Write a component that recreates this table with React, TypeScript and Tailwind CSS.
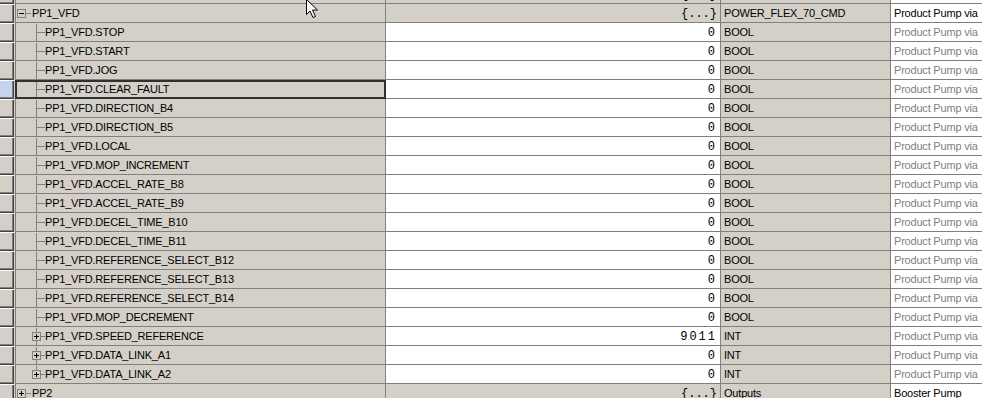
import React from "react";

type Row = {
  name: string;
  level: 0 | 1;
  box?: "+" | "-";
  value: string;
  type: string;
  desc: string;
  last?: boolean;
  focus?: boolean;
};

const leafNames = [
  "STOP",
  "START",
  "JOG",
  "CLEAR_FAULT",
  "DIRECTION_B4",
  "DIRECTION_B5",
  "LOCAL",
  "MOP_INCREMENT",
  "ACCEL_RATE_B8",
  "ACCEL_RATE_B9",
  "DECEL_TIME_B10",
  "DECEL_TIME_B11",
  "REFERENCE_SELECT_B12",
  "REFERENCE_SELECT_B13",
  "REFERENCE_SELECT_B14",
  "MOP_DECREMENT",
];

const rows: Row[] = [
  { name: "PP1_VFD", level: 0, box: "-", value: "{...}", type: "POWER_FLEX_70_CMD", desc: "Product Pump via" },
  ...leafNames.map((n) => ({
    name: "PP1_VFD." + n,
    level: 1 as const,
    value: "0",
    type: "BOOL",
    desc: "Product Pump via",
    focus: n === "CLEAR_FAULT",
  })),
  { name: "PP1_VFD.SPEED_REFERENCE", level: 1, box: "+", value: "9011", type: "INT", desc: "Product Pump via" },
  { name: "PP1_VFD.DATA_LINK_A1", level: 1, box: "+", value: "0", type: "INT", desc: "Product Pump via" },
  { name: "PP1_VFD.DATA_LINK_A2", level: 1, box: "+", value: "0", type: "INT", desc: "Product Pump via", last: true },
  { name: "PP2", level: 0, box: "+", value: "{...}", type: "Outputs", desc: "Booster Pump" },
];

function ExpandBox({ x, sign }: { x: number; sign: "+" | "-" }) {
  return (
    <g>
      <rect x={x + 0.5} y={4.5} width={8} height={8} fill="#d4d0c8" stroke="#808080" />
      <line x1={x + 2} x2={x + 7} y1={8.5} y2={8.5} stroke="#000" />
      {sign === "+" && <line x1={x + 4.5} x2={x + 4.5} y1={6} y2={11} stroke="#000" />}
    </g>
  );
}

function Tree({ row }: { row: Row }) {
  if (row.level === 0) {
    return (
      <svg width="16" height="18" className="shrink-0">
        <ExpandBox x={1} sign={row.box ?? "+"} />
        <line x1={10} x2={15} y1={8.5} y2={8.5} stroke="#808080" />
      </svg>
    );
  }
  return (
    <svg width="29" height="18" className="shrink-0">
      {row.box ? (
        <>
          <line x1={20.5} x2={20.5} y1={0} y2={4} stroke="#808080" />
          {!row.last && <line x1={20.5} x2={20.5} y1={13} y2={18} stroke="#808080" />}
          <ExpandBox x={16} sign={row.box} />
          <line x1={25} x2={29} y1={8.5} y2={8.5} stroke="#808080" />
        </>
      ) : (
        <>
          <line x1={20.5} x2={20.5} y1={0} y2={row.last ? 9 : 18} stroke="#808080" />
          <line x1={20} x2={29} y1={8.5} y2={8.5} stroke="#808080" />
        </>
      )}
    </svg>
  );
}

function GridRow({ row, top }: { row: Row; top?: boolean }) {
  const parent = row.level === 0;
  return (
    <div className={"flex h-[19px] " + (top ? "mt-[-15px]" : "")}>
      <div
        className={
          "w-[14px] shrink-0 shadow-[inset_0_1px_0_#ffffff,inset_-1px_-1px_0_#404040,inset_-2px_-2px_0_#808080] " +
          (row.focus ? "bg-[#c4d4f0]" : "bg-[#d4d0c8]")
        }
      />
      <div className="w-[1px] shrink-0 bg-[#d4d0c8]" />
      <div
        className={
          "w-[371px] shrink-0 flex items-center pt-[1px] border-l border-r border-b border-[#808080] tracking-[-0.2px] " +
          (row.focus ? "outline outline-2 outline-[#303030] -outline-offset-2" : "")
        }
      >
        <Tree row={row} />
        <span className="whitespace-nowrap">{row.name}</span>
      </div>
      <div
        className={
          "w-[335px] shrink-0 flex items-center justify-end pr-[3px] pt-[1px] border-r border-b border-[#808080] font-['Liberation_Mono',monospace] text-[12px] " +
          (parent ? "bg-[#d4d0c8] tracking-[0px]" : "bg-white tracking-[2px]")
        }
      >
        {row.value}
      </div>
      <div className="w-[170px] shrink-0 flex items-center pl-[3px] pt-[1px] border-r border-b border-[#808080] whitespace-nowrap tracking-[-0.2px]">
        {row.type}
      </div>
      <div
        className={
          "flex-1 flex items-center pl-[3px] pt-[1px] border-b border-[#808080] bg-white whitespace-nowrap overflow-hidden tracking-[-0.2px] " +
          (parent ? "text-black" : "text-[#808080]")
        }
      >
        {row.desc}
      </div>
    </div>
  );
}

export default function App() {
  return (
    <div className="relative w-[982px] h-[398px] overflow-hidden bg-[#d4d0c8] font-['Liberation_Sans',Arial,sans-serif] text-[11px] text-black">
      <GridRow
        top
        row={{ name: "PP1_VFD_STS", level: 0, box: "+", value: "{...}", type: "POWER_FLEX_70_STS", desc: "Product Pump via" }}
      />
      {rows.map((r) => (
        <GridRow key={r.name} row={r} />
      ))}
      {/* mouse pointer */}
      <svg className="absolute left-[306px] top-[-1px]" width="14" height="20" viewBox="0 0 14 20">
        <polygon points="0.5,0.5 0.5,15.5 4,12 7,18.5 9.5,17.5 6.5,11 11.5,11" fill="#fff" stroke="#000" />
      </svg>
    </div>
  );
}
